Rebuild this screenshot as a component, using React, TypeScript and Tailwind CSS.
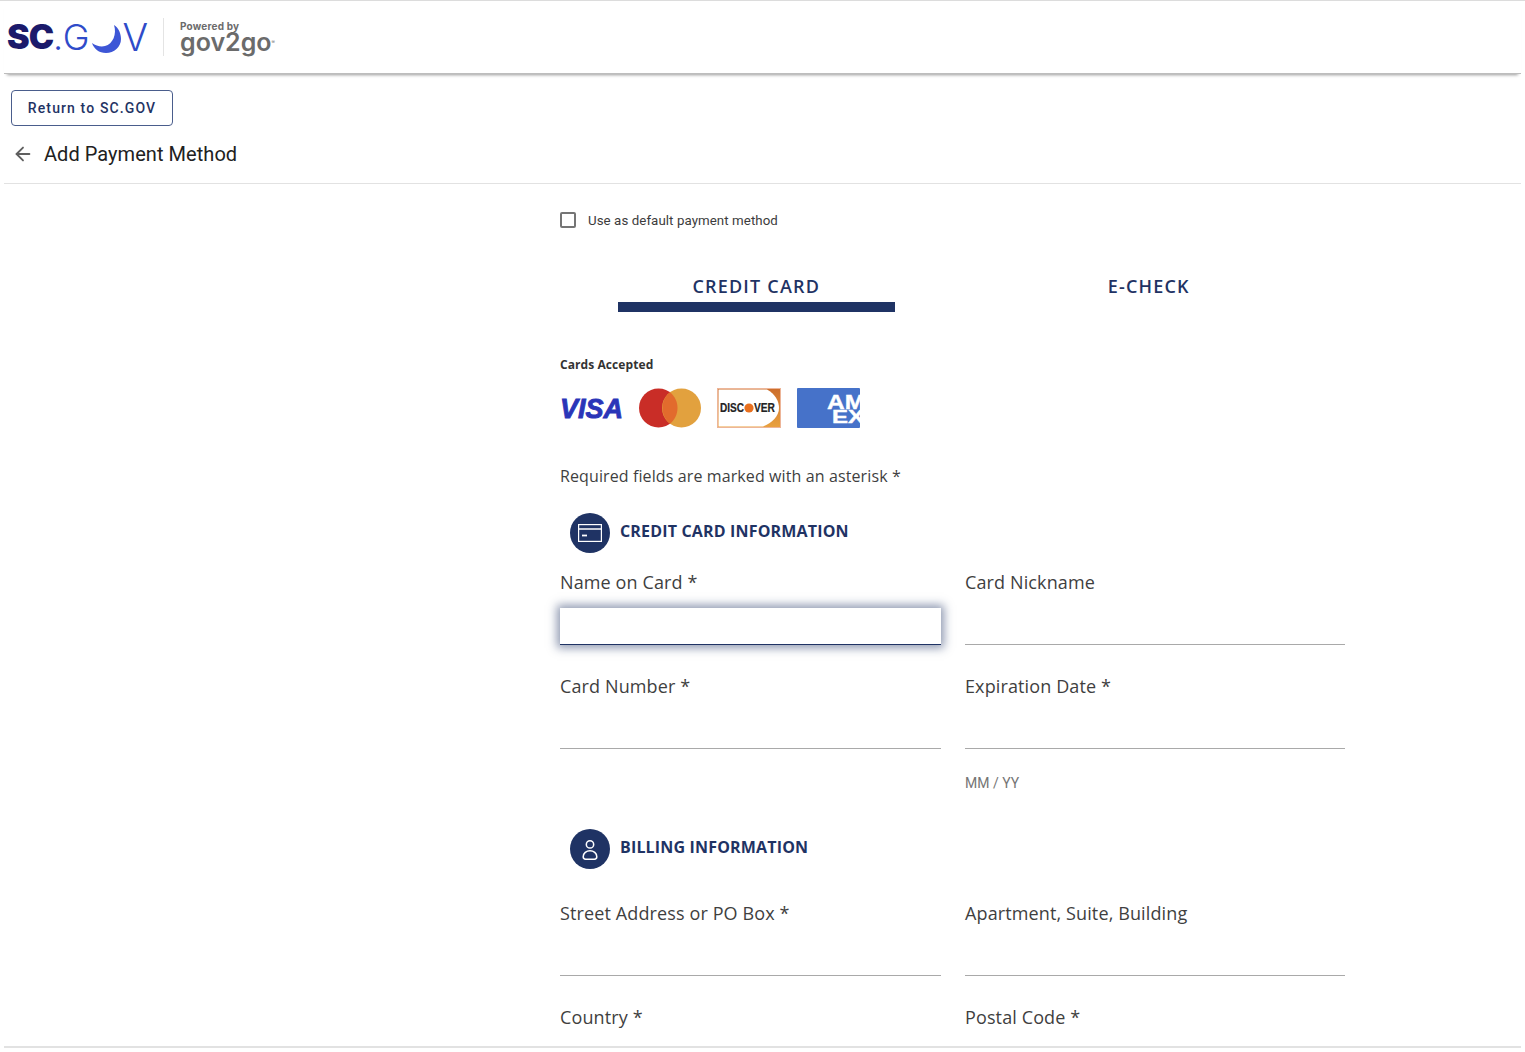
import { ArrowLeft } from "lucide-react";

const openSans = "font-['Open_Sans',sans-serif]";

function Logo() {
  return (
    <div className="flex items-center">
      <div className="flex items-center w-[140px] h-[40px] leading-none font-['Inter',sans-serif]">
        <span className="text-[34px] font-black text-[#1b1a6b] tracking-[-1px]">SC</span>
        <span className="text-[36px] font-light text-[#2f4bc9] tracking-[1px]">.G</span>
        <svg viewBox="0 0 30 28" className="w-[30px] h-[28px] mt-[3px] ml-[1px] shrink-0">
          <path d="M23 0 C28 3 30 9 30 14 C30 22 23 28 15 28 C8 28 3 24 1 18 C5 21 10 22 14 21 C22 19 26 9 23 0 Z" fill="#3d56d6" />
        </svg>
        <span className="text-[38px] font-light text-[#2f4bc9] ml-[1px]">V</span>
      </div>
      <div className="w-px h-[38px] bg-[#e4e4e4] ml-[16px]" />
      <div className="ml-[16px] pb-[3px] flex flex-col font-['Inter',sans-serif] text-[#6b6b6b]">
        <span className="text-[10px] leading-[10px] font-bold tracking-[0.2px] mt-[1px]">Powered by</span>
        <div className="flex items-start mt-[1px]">
          <span className="text-[25px] leading-[20px] font-semibold">gov2go</span>
          <span className="text-[5px] leading-[5px] mt-[8px]">®</span>
        </div>
      </div>
    </div>
  );
}

function CardLogos() {
  return (
    <div className="flex items-center gap-[16px] mt-[15px] h-[40px]">
      <svg viewBox="0 0 63 40" className="w-[63px] h-[40px] overflow-visible">
        <text x="0" y="30" fontFamily="'Liberation Sans', sans-serif" fontWeight="700" fontStyle="italic" fontSize="28" fill="#2a35b8" stroke="#2a35b8" strokeWidth="0.9" textLength="63" lengthAdjust="spacingAndGlyphs">VISA</text>
      </svg>
      <svg viewBox="0 0 62 40" className="w-[62px] h-[40px]">
        <circle cx="19.5" cy="20" r="19.5" fill="#c92d27" />
        <circle cx="42.5" cy="20" r="19.5" fill="#e2a13e" />
        <path d="M31 4.3 C35.7 8 38.5 13.7 38.5 20 C38.5 26.3 35.7 32 31 35.7 C26.3 32 23.5 26.3 23.5 20 C23.5 13.7 26.3 8 31 4.3 Z" fill="#e26b2d" />
      </svg>
      <svg viewBox="0 0 64 40" className="w-[64px] h-[40px]">
        <defs>
          <linearGradient id="disc" x1="0" y1="0" x2="0" y2="1">
            <stop offset="0" stopColor="#cc6d2b" />
            <stop offset="1" stopColor="#e9a23f" />
          </linearGradient>
        </defs>
        <rect x="0.5" y="0.5" width="63" height="39" fill="url(#disc)" />
        <path d="M1.5 1.5 H50 C58 6 62 13 62 20 C62 28 55 35 46 38.5 H1.5 Z" fill="#fff" />
        <rect x="0.5" y="0.5" width="63" height="39" fill="none" stroke="#edb598" />
        <text x="3" y="24" fontFamily="'Liberation Sans', sans-serif" fontWeight="700" fontSize="12" fill="#222" stroke="#222" strokeWidth="0.2" textLength="24" lengthAdjust="spacingAndGlyphs">DISC</text>
        <circle cx="32" cy="20" r="4.6" fill="#e8701f" />
        <text x="37" y="24" fontFamily="'Liberation Sans', sans-serif" fontWeight="700" fontSize="12" fill="#222" stroke="#222" strokeWidth="0.2" textLength="21" lengthAdjust="spacingAndGlyphs">VER</text>
      </svg>
      <svg viewBox="0 0 63 40" className="w-[63px] h-[40px]">
        <rect width="63" height="40" rx="1" fill="#4672c9" />
        <text x="30" y="21" fontFamily="'Liberation Sans', sans-serif" fontWeight="700" fontSize="20" fill="#fff" stroke="#fff" strokeWidth="0.4" textLength="38" lengthAdjust="spacingAndGlyphs">AM</text>
        <text x="35" y="35" fontFamily="'Liberation Sans', sans-serif" fontWeight="700" fontSize="18" fill="#fff" stroke="#fff" strokeWidth="0.4" textLength="32" lengthAdjust="spacingAndGlyphs">EX</text>
      </svg>
    </div>
  );
}

function Field({ label, focused }: { label: string; focused?: boolean }) {
  return (
    <div className="flex flex-col">
      <label className={`${openSans} text-[18px] leading-[25px] tracking-[0.12px] text-[#3f3f3f]`}>{label}</label>
      {focused ? (
        <div className="mt-[13px] h-[37px] bg-white border-b border-[#1f3364] shadow-[0_0_9px_3px_rgba(31,51,100,0.5)]" />
      ) : (
        <div className="mt-[13px] h-[37px] border-b border-[#a9a9a9]" />
      )}
    </div>
  );
}

function SectionTitle({ title, children }: { title: string; children: React.ReactNode }) {
  return (
    <div className="flex items-center pl-[10px]">
      <div className="w-[40px] h-[40px] rounded-full bg-[#1f3364] flex items-center justify-center">{children}</div>
      <span className={`${openSans} ml-[10px] -mt-[5px] text-[16px] font-bold tracking-[0.17px] text-[#1f3364]`}>{title}</span>
    </div>
  );
}

export default function App() {
  return (
    <div className="h-[1052px] overflow-hidden bg-white px-[4px] flex flex-col">
      <div className="h-px bg-[#dcdcdc] -mx-[4px]" />
      <header className="h-[73px] flex items-center pl-[3px] border-b border-[#bdbdbd] shadow-[0_4px_3px_-3px_rgba(0,0,0,0.4)] shrink-0">
        <Logo />
      </header>

      <div className="pl-[7px] pt-[16px] shrink-0">
        <button className="w-[162px] h-[36px] rounded-[4px] border border-[#4a5d8c] font-['Roboto',sans-serif] text-[14px] font-medium tracking-[1.12px] text-[#1f3364]">
          Return to SC.GOV
        </button>
      </div>

      <div className="flex items-center h-[58px] pl-[8px] pb-[2px] border-b border-[#e2e2e2] shrink-0">
        <ArrowLeft className="w-[22px] h-[22px] text-[#5f5f5f]" strokeWidth={2} />
        <h1 className="ml-[10px] font-['Roboto',sans-serif] text-[20px] text-[#212121] tracking-[0.05px]">Add Payment Method</h1>
      </div>

      <main className="flex-1 min-h-0 ml-[556px] w-[785px]">
        <div className="flex items-center h-[18px] mt-[27px]">
          <span className="w-[16px] h-[16px] rounded-[2px] border-2 border-[#757575]" />
          <span className="ml-[12px] mt-[1px] font-['Roboto',sans-serif] text-[13.3px] text-[#3c3c3c] tracking-[0.07px]">Use as default payment method</span>
        </div>

        <div className="grid grid-cols-2 mt-[45px]">
          <div className="flex flex-col items-center">
            <span className={`${openSans} text-[18px] leading-[25px] font-semibold tracking-[1.2px] text-[#1f3364]`}>CREDIT CARD</span>
            <div className="w-[277px] h-[10px] mt-[3px] bg-[#1f3364]" />
          </div>
          <div className="flex flex-col items-center">
            <span className={`${openSans} text-[18px] leading-[25px] font-semibold tracking-[1.2px] text-[#1f3364]`}>E-CHECK</span>
          </div>
        </div>

        <div className={`${openSans} mt-[44px] text-[12px] leading-[17px] font-bold tracking-[0.08px] text-[#333]`}>Cards Accepted</div>
        <CardLogos />

        <p className={`${openSans} mt-[37px] text-[16px] leading-[22px] tracking-[0.11px] text-[#3f3f3f]`}>Required fields are marked with an asterisk *</p>

        <div className="mt-[26px]">
          <SectionTitle title="CREDIT CARD INFORMATION">
            <svg viewBox="0 0 24 18" className="w-[24px] h-[18px]" fill="none" stroke="#fff" strokeWidth="1.2">
              <rect x="0.6" y="0.6" width="22.8" height="16.8" />
              <path d="M0.6 5 H23.4" strokeWidth="1.5" />
              <path d="M4 11.5 H9" strokeWidth="1.8" />
            </svg>
          </SectionTitle>
        </div>

        <div className="grid grid-cols-[381px_380px] gap-x-[24px] gap-y-[29px] mt-[17px]">
          <Field label="Name on Card *" focused />
          <Field label="Card Nickname" />
          <Field label="Card Number *" />
          <Field label="Expiration Date *" />
        </div>
        <div className="grid grid-cols-[381px_380px] gap-x-[24px] mt-[25px]">
          <div />
          <span className="font-['Roboto',sans-serif] text-[14px] leading-[18px] text-[#757575]">MM / YY</span>
        </div>

        <div className="mt-[37px]">
          <SectionTitle title="BILLING INFORMATION">
            <svg viewBox="0 0 20 26" className="w-[16px] h-[22px] mt-[1px]" fill="none" stroke="#fff" strokeWidth="1.9">
              <circle cx="10" cy="6" r="4.6" />
              <path d="M4.5 24.5 H15.5 C17.5 24.5 18.5 23.5 18.5 21.5 C18.5 17 14.5 14 10 14 C5.5 14 1.5 17 1.5 21.5 C1.5 23.5 2.5 24.5 4.5 24.5 Z" />
            </svg>
          </SectionTitle>
        </div>

        <div className="grid grid-cols-[381px_380px] gap-x-[24px] gap-y-[29px] mt-[32px]">
          <Field label="Street Address or PO Box *" />
          <Field label="Apartment, Suite, Building" />
          <div className={`${openSans} text-[18px] leading-[25px] tracking-[0.12px] text-[#3f3f3f]`}>Country *</div>
          <div className={`${openSans} text-[18px] leading-[25px] tracking-[0.12px] text-[#3f3f3f]`}>Postal Code *</div>
        </div>
      </main>
      <div className="h-[2px] bg-[#e2e2e2] shrink-0 mb-[4px]" />
    </div>
  );
}
